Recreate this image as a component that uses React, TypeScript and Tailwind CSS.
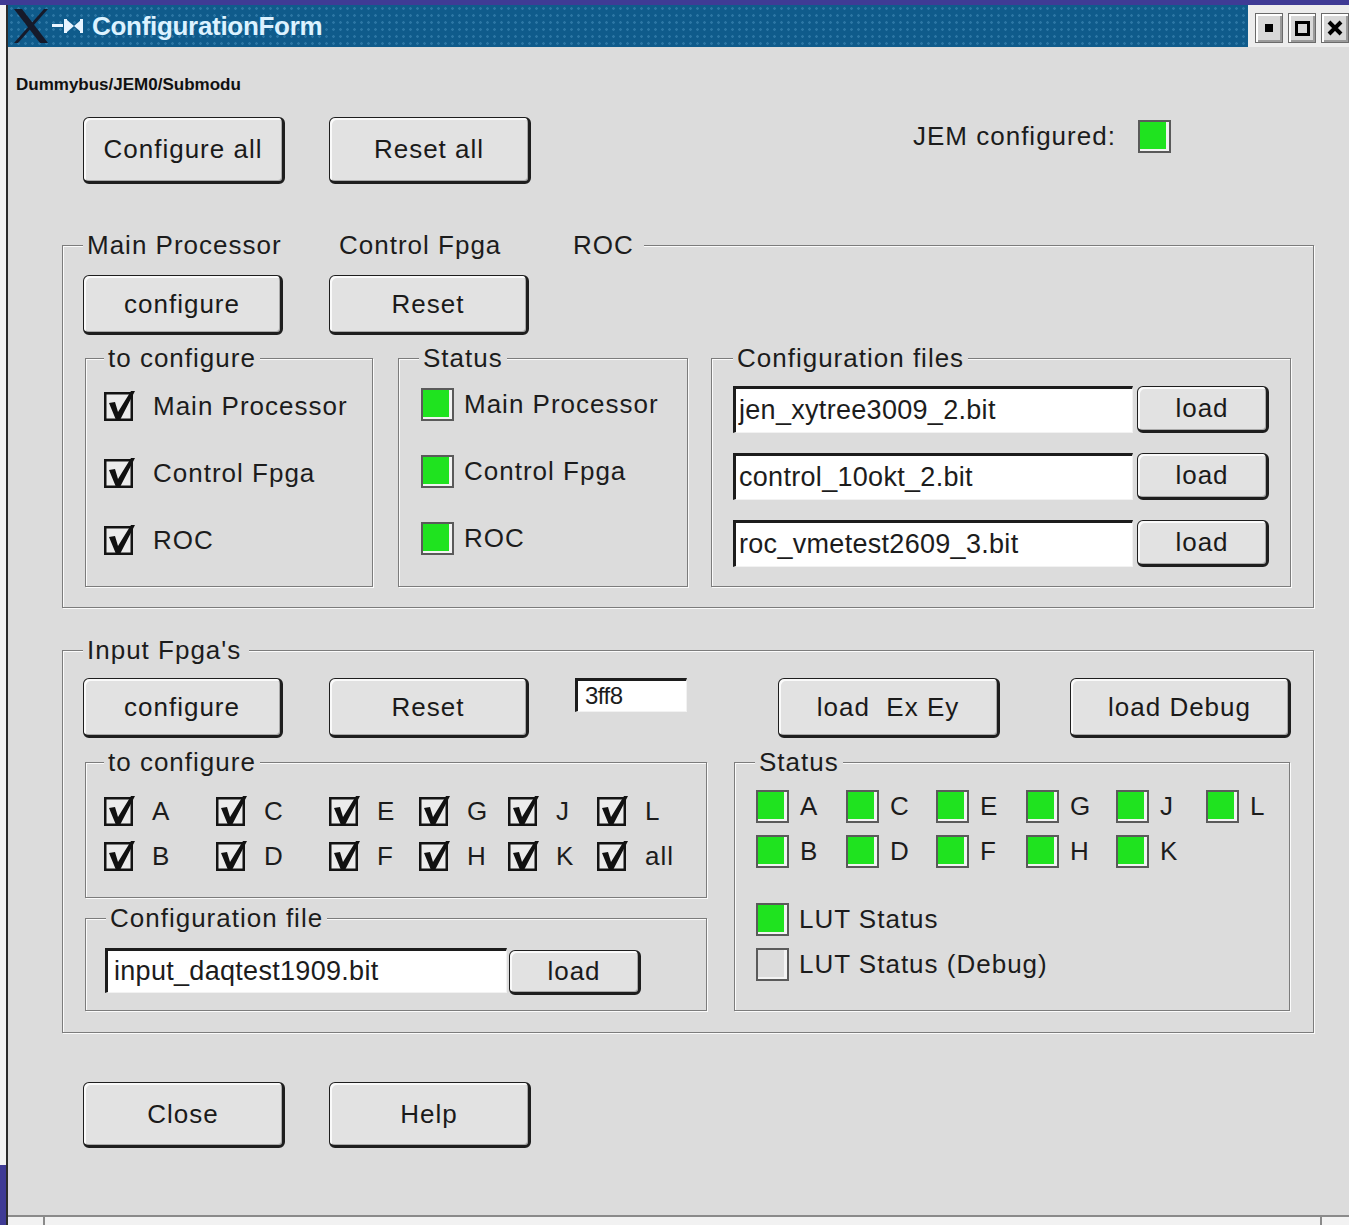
import React from "react";
import clsx from "clsx";

// Motif style push button
function MotifButton({ label, className }: { label: string; className?: string }) {
  return (
    <button
      className={clsx(
        "flex shrink-0 items-center justify-center whitespace-pre rounded-[6px] border border-[#1e1e1e] border-r-[3px] border-b-[3px] bg-[#e2e2e2] text-[26px] tracking-[1px] text-[#1a1a1a] shadow-[inset_2px_2px_0_#fafafa,inset_-1px_-1px_0_#a9a9a9]",
        className
      )}
    >
      {label}
    </button>
  );
}

// etched frame with its title sitting on the top line
function Group({
  title,
  titleClass,
  className,
  children,
}: {
  title: React.ReactNode;
  titleClass: string;
  className?: string;
  children?: React.ReactNode;
}) {
  return (
    <div
      className={clsx(
        "relative shrink-0 border border-[#7c7c7c] shadow-[inset_1px_1px_0_#fbfbfb,1px_1px_0_#fbfbfb]",
        className
      )}
    >
      <div
        className={clsx(
          "absolute -top-[14px] flex bg-[#dcdcdc] px-[4px] text-[26px] leading-[26px] tracking-[1px]",
          titleClass
        )}
      >
        {title}
      </div>
      {children}
    </div>
  );
}

function CheckMark() {
  return (
    <svg width="32" height="32" viewBox="0 0 32 32" className="shrink-0">
      <rect x="1.25" y="3.25" width="26.5" height="26.5" fill="#ececec" stroke="#141414" strokeWidth="2.5" />
      <polygon points="5,13 11,12 14,22 27,1 31,1 16,30 12,30" fill="#111" />
    </svg>
  );
}

function Led({ on = true, className }: { on?: boolean; className?: string }) {
  return (
    <span
      className={clsx(
        "inline-block h-[33px] w-[33px] shrink-0 border-2 border-[#5a5a5a] shadow-[inset_-3px_0_0_#f3f3f3,inset_0_-2px_0_#f3f3f3]",
        on ? "bg-[#1fe31f]" : "bg-[#dcdcdc]",
        className
      )}
    />
  );
}

function TextField({ value, className }: { value: string; className?: string }) {
  return (
    <div
      className={clsx(
        "flex shrink-0 items-center border-t-[3px] border-l-[3px] border-r border-b border-t-[#1c1c1c] border-l-[#1c1c1c] border-r-[#f2f2f2] border-b-[#f2f2f2] bg-white",
        className
      )}
    >
      {value}
    </div>
  );
}

function XLogo() {
  return (
    <svg width="34" height="34" viewBox="0 0 34 34" className="ml-[6px] shrink-0">
      <polygon points="0,0 8,0 34,34 26,34" fill="#161a2a" />
      <polygon points="30,0 34,0 4,34 0,34" fill="#161a2a" />
    </svg>
  );
}

function PinIcon() {
  return (
    <svg width="32" height="20" viewBox="0 0 32 20" className="ml-[4px] shrink-0">
      <rect x="0" y="8" width="11" height="3" fill="#e8f4ff" />
      <rect x="12" y="3" width="3" height="14" fill="#e8f4ff" />
      <polygon points="15,4 22,10 15,16" fill="#e8f4ff" />
      <polygon points="29,4 22,10 29,16" fill="#e8f4ff" />
      <rect x="28" y="3" width="3" height="14" fill="#e8f4ff" />
    </svg>
  );
}

function TitleButton({ children }: { children: React.ReactNode }) {
  return (
    <div className="flex h-[30px] w-[30px] items-center justify-center border border-[#6a6a6a] bg-[#d8d8d8] shadow-[inset_2px_2px_0_#ffffff,inset_-2px_-2px_0_#9a9a9a]">
      {children}
    </div>
  );
}

function TitleBar() {
  return (
    <div className="flex h-[42px] shrink-0">
      <div className="flex flex-1 items-center bg-[#0f5b8b] [background-image:radial-gradient(circle,#2c76a4_1px,transparent_1.6px)] [background-size:7px_7px]">
        <XLogo />
        <PinIcon />
        <span className="ml-[8px] text-[26px] font-bold leading-none tracking-[-0.3px] text-[#dcf2ff]">
          ConfigurationForm
        </span>
      </div>
      <div className="flex w-[101px] items-start gap-[5px] bg-[#ededed] pl-[7px] pt-[8px]">
        <TitleButton>
          <span className="h-[8px] w-[8px] bg-black" />
        </TitleButton>
        <TitleButton>
          <span className="h-[15px] w-[15px] border-[3px] border-black" />
        </TitleButton>
        <TitleButton>
          <svg width="16" height="16" viewBox="0 0 16 16">
            <path d="M2 2 L14 14 M14 2 L2 14" stroke="#000" strokeWidth="4" />
          </svg>
        </TitleButton>
      </div>
    </div>
  );
}

const mainItems = ["Main Processor", "Control Fpga", "ROC"];
const mainFiles = ["jen_xytree3009_2.bit", "control_10okt_2.bit", "roc_vmetest2609_3.bit"];

// input fpga checkboxes, column by column with their widths
const fpgaCols = [
  { w: "w-[112px]", top: "A", bottom: "B" },
  { w: "w-[113px]", top: "C", bottom: "D" },
  { w: "w-[90px]", top: "E", bottom: "F" },
  { w: "w-[89px]", top: "G", bottom: "H" },
  { w: "w-[89px]", top: "J", bottom: "K" },
  { w: "w-[80px]", top: "L", bottom: "all" },
];

const ledTop = ["A", "C", "E", "G", "J", "L"];
const ledBottom = ["B", "D", "F", "H", "K"];

function MainProcessorGroup() {
  return (
    <Group
      className="ml-[54px] mt-[61px] h-[363px] w-[1252px]"
      titleClass="left-[20px] pr-[10px]"
      title={
        <>
          <span className="w-[252px]">Main Processor</span>
          <span className="w-[234px]">Control Fpga</span>
          <span>ROC</span>
        </>
      }
    >
      <div className="flex gap-[46px] pl-[20px] pt-[29px]">
        <MotifButton label="configure" className="h-[60px] w-[200px]" />
        <MotifButton label="Reset" className="h-[60px] w-[200px]" />
      </div>
      <div className="ml-[22px] mt-[23px] flex">
        <Group title="to configure" titleClass="left-[18px]" className="h-[229px] w-[288px]">
          <div className="flex flex-col gap-[35px] pl-[18px] pt-[31px]">
            {mainItems.map((t) => (
              <div key={t} className="flex h-[32px] items-center">
                <CheckMark />
                <span className="ml-[17px] text-[26px] tracking-[1px]">{t}</span>
              </div>
            ))}
          </div>
        </Group>
        <Group title="Status" titleClass="left-[20px]" className="ml-[25px] h-[229px] w-[290px]">
          <div className="flex flex-col gap-[34px] pl-[22px] pt-[29px]">
            {mainItems.map((t) => (
              <div key={t} className="flex h-[33px] items-center">
                <Led />
                <span className="ml-[10px] text-[26px] tracking-[1px]">{t}</span>
              </div>
            ))}
          </div>
        </Group>
        <Group title="Configuration files" titleClass="left-[21px]" className="ml-[23px] h-[229px] w-[580px]">
          <div className="flex flex-col gap-[20px] pl-[21px] pt-[27px]">
            {mainFiles.map((f) => (
              <div key={f} className="flex">
                <TextField value={f} className="h-[47px] w-[400px] pl-[3px] text-[27px] tracking-[0.3px]" />
                <MotifButton label="load" className="ml-[4px] h-[47px] w-[132px] tracking-[0px]" />
              </div>
            ))}
          </div>
        </Group>
      </div>
    </Group>
  );
}

function InputFpgaGroup() {
  return (
    <Group className="ml-[54px] mt-[42px] h-[383px] w-[1252px]" titleClass="left-[20px] pr-[8px]" title="Input Fpga's">
      <div className="flex items-start pl-[20px] pt-[27px]">
        <MotifButton label="configure" className="h-[60px] w-[200px]" />
        <MotifButton label="Reset" className="ml-[46px] h-[60px] w-[200px]" />
        <TextField value="3ff8" className="ml-[46px] h-[34px] w-[112px] pl-[7px] text-[24px] tracking-[-0.5px]" />
        <MotifButton label="load  Ex Ey" className="ml-[91px] h-[60px] w-[222px]" />
        <MotifButton label="load Debug" className="ml-[70px] h-[60px] w-[221px]" />
      </div>
      <div className="ml-[22px] mt-[24px] flex">
        <div className="flex flex-col">
          <Group title="to configure" titleClass="left-[18px]" className="h-[136px] w-[622px]">
            <div className="flex pl-[18px] pt-[32px]">
              {fpgaCols.map((c) => (
                <div key={c.top} className={clsx("flex flex-col gap-[13px]", c.w)}>
                  {[c.top, c.bottom].map((l) => (
                    <div key={l} className="flex h-[32px] items-center">
                      <CheckMark />
                      <span className="ml-[16px] text-[26px] tracking-[1px]">{l}</span>
                    </div>
                  ))}
                </div>
              ))}
            </div>
          </Group>
          <Group title="Configuration file" titleClass="left-[20px]" className="mt-[20px] h-[93px] w-[622px]">
            <div className="flex items-start pl-[19px] pt-[29px]">
              <TextField value="input_daqtest1909.bit" className="h-[45px] w-[402px] pl-[6px] text-[27px] tracking-[0.3px]" />
              <MotifButton label="load" className="ml-[2px] mt-[2px] h-[45px] w-[132px] tracking-[0px]" />
            </div>
          </Group>
        </div>
        <Group title="Status" titleClass="left-[20px]" className="ml-[27px] h-[249px] w-[556px]">
          <div className="flex flex-col pl-[21px] pt-[27px]">
            <div className="grid grid-cols-[repeat(6,90px)] gap-y-[12px]">
              {ledTop.map((l) => (
                <div key={l} className="flex h-[33px] items-center">
                  <Led />
                  <span className="ml-[11px] text-[26px]">{l}</span>
                </div>
              ))}
              {ledBottom.map((l) => (
                <div key={l} className="flex h-[33px] items-center">
                  <Led />
                  <span className="ml-[11px] text-[26px]">{l}</span>
                </div>
              ))}
            </div>
            <div className="mt-[35px] flex h-[33px] items-center">
              <Led />
              <span className="ml-[10px] text-[26px] tracking-[1px]">LUT Status</span>
            </div>
            <div className="mt-[12px] flex h-[33px] items-center">
              <Led on={false} />
              <span className="ml-[10px] text-[26px] tracking-[1px]">LUT Status (Debug)</span>
            </div>
          </div>
        </Group>
      </div>
    </Group>
  );
}

export default function App() {
  return (
    <div className="h-[1225px] w-[1349px] overflow-hidden bg-[#3f3b95] pt-[5px] font-['Liberation_Sans',Arial,sans-serif] text-[#1c1c1c]">
      <div className="flex h-[1220px]">
        <div className="flex w-[6px] flex-col">
          <div className="h-[1160px] bg-[#f4f4f4]" />
        </div>
        <div className="flex min-w-0 flex-1 flex-col border-l-2 border-[#2c2c2c] bg-[#dcdcdc]">
          <TitleBar />

          <div className="ml-[8px] mt-[27px] text-[17px] font-bold leading-[22px] text-[#111]">
            Dummybus/JEM0/Submodu
          </div>

          <div className="ml-[75px] mt-[21px] flex items-start">
            <MotifButton label="Configure all" className="h-[67px] w-[202px]" />
            <MotifButton label="Reset all" className="ml-[44px] h-[67px] w-[202px]" />
            <div className="ml-[382px] mt-[3px] flex h-[32px] items-center">
              <span className="text-[26px] tracking-[1px]">JEM configured:</span>
              <Led className="ml-[22px] h-[32px] w-[32px]" />
            </div>
          </div>

          <MainProcessorGroup />
          <InputFpgaGroup />

          <div className="ml-[75px] mt-[49px] flex gap-[44px]">
            <MotifButton label="Close" className="h-[66px] w-[202px]" />
            <MotifButton label="Help" className="h-[66px] w-[202px]" />
          </div>

          <div className="mt-auto flex h-[10px] border-t-2 border-[#8a8a8a] bg-[#f2f2f2]">
            <div className="w-[37px] border-r-2 border-[#8a8a8a]" />
            <div className="flex-1 border-r-2 border-[#8a8a8a]" />
            <div className="w-[27px]" />
          </div>
        </div>
      </div>
    </div>
  );
}
